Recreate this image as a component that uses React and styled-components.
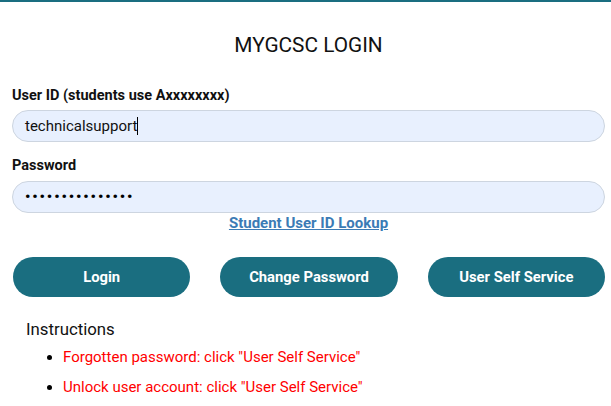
import React from 'react'
import styled, { createGlobalStyle } from 'styled-components'

const GlobalStyle = createGlobalStyle`
  body {
    margin: 0;
    background: #fff;
    font-family: Roboto, "Liberation Sans", sans-serif;
    color: #000;
  }
`

const teal = '#1a6e80'

function App() {
  return (
    <>
      <GlobalStyle />
      <Page>
        <Title>MYGCSC LOGIN</Title>
        <Label>User ID (students use Axxxxxxxx)</Label>
        <Field>
          technicalsupport
          <Caret />
        </Field>
        <Label $top={15}>Password</Label>
        <Field $top={7} $dots>
          {'•'.repeat(15)}
        </Field>
        <LinkRow>
          <Lookup href="#">Student User ID Lookup</Lookup>
        </LinkRow>
        <Buttons>
          <Button>Login</Button>
          <Button>Change Password</Button>
          <Button>User Self Service</Button>
        </Buttons>
        <Instructions>
          <h3>Instructions</h3>
          <ul>
            <li>Forgotten password: click "User Self Service"</li>
            <li>Unlock user account: click "User Self Service"</li>
          </ul>
        </Instructions>
      </Page>
    </>
  )
}

export default App

const Page = styled.div`
  border-top: 2px solid ${teal};
  padding: 0 6px 0 12px;
  min-height: 404px;
`

const Title = styled.h1`
  margin: 31px 0 0;
  text-align: center;
  font-size: 20.8px;
  line-height: 24px;
  font-weight: 400;
  color: #111;
`

const Label = styled.div`
  margin-top: ${(p) => p.$top ?? 30}px;
  font-size: 14.5px;
  line-height: 17px;
  font-weight: 700;
  color: #111;
`

const Field = styled.div`
  margin-top: ${(p) => p.$top ?? 6}px;
  height: 32px;
  box-sizing: border-box;
  display: flex;
  align-items: center;
  padding: 0 12px;
  border: 1px solid #cdd5e0;
  border-radius: 16px;
  background: #e8f0fe;
  font-size: 15px;
  color: #111;
  letter-spacing: ${(p) => (p.$dots ? '1.9px' : '0')};
  ${(p) => p.$dots && 'font-weight: 700; color: #000; padding-bottom: 1px;'}
`

const Caret = styled.span`
  display: inline-block;
  width: 1px;
  height: 18px;
  margin-left: 0;
  background: #000;
`

const LinkRow = styled.div`
  margin-top: 1px;
  text-align: center;
  line-height: 17px;
`

const Lookup = styled.a`
  font-size: 15px;
  font-weight: 700;
  color: #3b7bb5;
  text-decoration: underline;
`

const Buttons = styled.div`
  margin-top: 25px;
  padding-left: 1px;
  display: grid;
  grid-template-columns: repeat(3, 1fr);
  column-gap: 30px;
`

const Button = styled.button`
  height: 40px;
  border: none;
  border-radius: 20px;
  background: ${teal};
  color: #fff;
  font-family: Roboto, "Liberation Sans", sans-serif;
  font-size: 14.8px;
  font-weight: 700;
  cursor: pointer;
`

const Instructions = styled.div`
  padding-left: 14px;

  h3 {
    margin: 22px 0 0;
    font-size: 16.8px;
    line-height: 20px;
    font-weight: 400;
    color: #111;
  }

  ul {
    margin: 8px 0 0;
    padding-left: 37px;
  }

  li {
    font-size: 15px;
    line-height: 20px;
    color: #f00;
    margin-bottom: 10px;
  }
  li::marker {
    color: #000;
  }
`
